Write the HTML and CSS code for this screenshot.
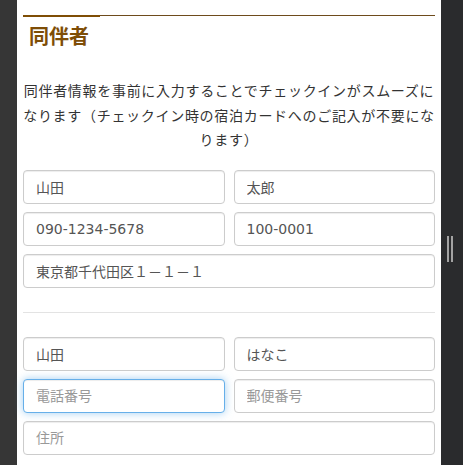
FILE: index.html
```html
<!DOCTYPE html>
<html lang="ja">
<head>
<meta charset="utf-8">
<title>同伴者</title>
<link rel="stylesheet" href="styles.css">
</head>
<body>
<div class="side-left"></div>
<main class="page">
  <h2 class="section-title">同伴者</h2>
  <p class="lead">同伴者情報を事前に入力することでチェックインがスムーズになります（チェックイン時の宿泊カードへのご記入が不要になります）</p>
  <div class="companion">
    <input class="field" type="text" value="山田">
    <input class="field" type="text" value="太郎">
    <input class="field" type="text" value="090-1234-5678">
    <input class="field" type="text" value="100-0001">
    <input class="field wide" type="text" value="東京都千代田区１－１－１">
  </div>
  <hr class="divider">
  <div class="companion">
    <input class="field" type="text" value="山田">
    <input class="field" type="text" value="はなこ">
    <input class="field is-focused" type="text" placeholder="電話番号">
    <input class="field" type="text" placeholder="郵便番号">
    <input class="field wide" type="text" placeholder="住所">
  </div>
</main>
<div class="side-right">
  <div class="grip"><span></span><span></span></div>
</div>
</body>
</html>
```

FILE: styles.css
```css
html, body {
  margin: 0;
  padding: 0;
  height: 465px;
  overflow: hidden;
}
body {
  display: flex;
  background: #2a2b2d;
  font-family: "Noto Sans CJK JP", "Noto Sans", sans-serif;
}
.side-left {
  width: 17px;
  flex: none;
  background: #363636;
}
.page {
  width: 412px;
  flex: none;
  background: #fff;
  padding: 15px 6px 0;
}
.side-right {
  flex: 1;
  background: #2a2b2d;
  padding-top: 236px;
}
.grip {
  display: flex;
  gap: 2px;
  margin-left: 6px;
}
.grip span {
  width: 2px;
  height: 26px;
  background: #a3a3a3;
}
.section-title {
  position: relative;
  margin: 0;
  border-top: 1px solid #6e4b1c;
  padding: 6px 6px 0;
  font-size: 20px;
  line-height: 28px;
  font-weight: bold;
  color: #7e4d06;
}
.section-title::before {
  content: "";
  position: absolute;
  top: -1px;
  left: 0;
  width: 77px;
  height: 2px;
  background: #7f4e05;
}
.lead {
  margin: 28px 0 18px;
  font-size: 14px;
  letter-spacing: 0.7px;
  line-height: 24.5px;
  color: #333;
  text-align: center;
}
.companion {
  display: grid;
  grid-template-columns: 1fr 1fr;
  column-gap: 9px;
  row-gap: 8px;
}
.field {
  box-sizing: border-box;
  width: 100%;
  height: 34px;
  margin: 0;
  padding: 6px 12px;
  font-family: "DejaVu Sans", "Noto Sans CJK JP", sans-serif;
  font-size: 14px;
  color: #555;
  background: #fff;
  border: 1px solid #ccc;
  border-radius: 4px;
  box-shadow: inset 0 1px 1px rgba(0,0,0,.075);
  outline: none;
}
.field::placeholder {
  color: #999;
}
.field.wide {
  grid-column: 1 / -1;
}
.field.is-focused {
  border-color: #66afe9;
  box-shadow: inset 0 1px 1px rgba(0,0,0,.075), 0 0 8px rgba(102,175,233,.6);
}
.divider {
  margin: 24px 0;
  border: 0;
  border-top: 1px solid #e3e3e3;
}
```
